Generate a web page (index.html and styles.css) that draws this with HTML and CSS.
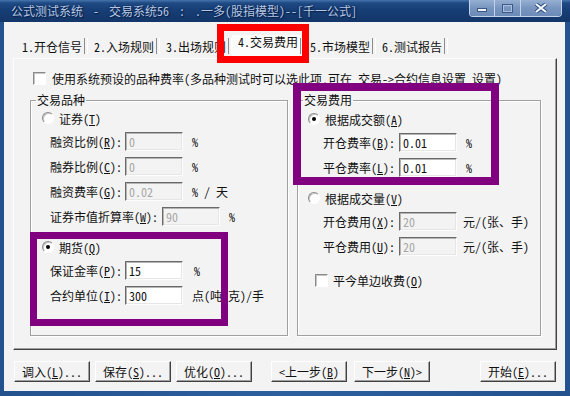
FILE: index.html
```html
<!DOCTYPE html>
<html lang="zh-CN">
<head>
    <meta charset="UTF-8">
    <title>公式测试系统</title>
    <link rel="stylesheet" href="styles.css">
</head>
<body>
<div class="window">
    <div class="titlebar">
        <span class="title">公式测试系统 - 交易系统56 : .一多(股指模型)--[千一公式]</span>
        <div class="caption-btns">
            <span class="cbtn cbtn-min"><i></i></span>
            <span class="cbtn cbtn-max"><i></i></span>
            <span class="cbtn cbtn-close">
                <svg width="14" height="10" viewBox="0 0 14 10">
                    <path d="M2 1 L12 9 M12 1 L2 9" stroke="#2b4a78" stroke-width="4"/>
                    <path d="M2 1 L12 9 M12 1 L2 9" stroke="#f4f8ff" stroke-width="2.2"/>
                </svg>
            </span>
        </div>
    </div>
    <div class="frame">
        <div class="client">
            <div class="tabs">
                <div class="tab">1.开仓信号</div>
                <div class="tab">2.入场规则</div>
                <div class="tab">3.出场规则</div>
                <div class="tab active">4.交易费用</div>
                <div class="tab">5.市场模型</div>
                <div class="tab">6.测试报告</div>
            </div>

            <div class="panel">
                <div class="check-row top-check"><span class="checkbox"></span>使用系统预设的品种费率(多品种测试时可以选此项,可在 交易->合约信息设置 设置)</div>

                <div class="groups">
                    <fieldset class="group group-kind">
                        <legend>交易品种</legend>
                        <div class="radio-row first"><span class="radio"></span>证券(<u>T</u>)</div>
                        <div class="row"><span class="lbl">融资比例(<u>R</u>):</span><span class="edit disabled">0</span><span class="unit">%</span></div>
                        <div class="row"><span class="lbl">融券比例(<u>C</u>):</span><span class="edit disabled">0</span><span class="unit">%</span></div>
                        <div class="row"><span class="lbl">融资费率(<u>G</u>):</span><span class="edit disabled">0.02</span><span class="unit">% / 天</span></div>
                        <div class="row"><span class="lbl lbl-wide">证券市值折算率(<u>W</u>):</span><span class="edit disabled">90</span><span class="unit">%</span></div>
                        <div class="radio-row"><span class="radio on"></span>期货(<u>Q</u>)</div>
                        <div class="row"><span class="lbl">保证金率(<u>P</u>):</span><span class="edit">15</span><span class="unit unit-pct">%</span></div>
                        <div class="row"><span class="lbl">合约单位(<u>I</u>):</span><span class="edit">300</span><span class="unit">点(吨 克)/手</span></div>
                    </fieldset>

                    <fieldset class="group group-fee">
                        <legend>交易费用</legend>
                        <div class="radio-row first"><span class="radio on"></span>根据成交额(<u>A</u>)</div>
                        <div class="row"><span class="lbl">开仓费率(<u>B</u>):</span><span class="edit">0.01</span><span class="unit">%</span></div>
                        <div class="row"><span class="lbl">平仓费率(<u>L</u>):</span><span class="edit">0.01</span><span class="unit">%</span></div>
                        <div class="radio-row"><span class="radio"></span>根据成交量(<u>V</u>)</div>
                        <div class="row"><span class="lbl">开仓费用(<u>X</u>):</span><span class="edit disabled">20</span><span class="unit unit-near">元/(张、手)</span></div>
                        <div class="row"><span class="lbl">平仓费用(<u>U</u>):</span><span class="edit disabled">20</span><span class="unit unit-near">元/(张、手)</span></div>
                        <div class="check-row today-check"><span class="checkbox"></span>平今单边收费(<u>O</u>)</div>
                    </fieldset>
                </div>
            </div>

            <div class="buttons">
                <button class="btn">调入(<u>L</u>)...</button>
                <button class="btn">保存(<u>S</u>)...</button>
                <button class="btn">优化(<u>O</u>)...</button>
                <button class="btn btn-prev">&lt;上一步(<u>B</u>)</button>
                <button class="btn btn-next">下一步(<u>N</u>)&gt;</button>
                <button class="btn btn-start">开始(<u>E</u>)...</button>
            </div>
        </div>
    </div>

    <!-- annotation boxes drawn over the dialog -->
    <div class="mark mark-tab"></div>
    <div class="mark mark-fee"></div>
    <div class="mark mark-kind"></div>
</div>
</body>
</html>
```

FILE: styles.css
```css
* {
    margin: 0;
    padding: 0;
    box-sizing: border-box;
}

body {
    width: 570px;
    height: 396px;
    overflow: hidden;
    font-family: "Noto Sans Mono CJK SC", "Noto Sans CJK SC", sans-serif;
    font-size: 12px;
    color: #111;
    background: #1f4b86;
}

u {
    text-decoration: underline;
    text-underline-offset: 1px;
}

.window {
    position: relative;
    width: 570px;
    height: 396px;
    display: flex;
    flex-direction: column;
    background: linear-gradient(90deg, #24528f, #2d5f9f 50%, #24528f);
}

/* title bar */
.titlebar {
    height: 22px;
    display: flex;
    align-items: flex-start;
    padding-left: 11px;
    background: linear-gradient(#4674ad 0, #1f4a84 3px, #173e76 45%, #133669 100%);
}

.title {
    flex: 1;
    line-height: 22px;
    white-space: nowrap;
    word-spacing: 4px;
    color: #b6c8e4;
    text-shadow: 0 0 2px #0a2148, 1px 1px 1px #0a2148;
}

.caption-btns {
    display: flex;
    height: 17px;
    margin-right: 8px;
    border: 1px solid #c3d2e8;
    border-top: none;
    border-radius: 0 0 4px 4px;
    overflow: hidden;
}

.cbtn {
    display: flex;
    align-items: center;
    justify-content: center;
    height: 100%;
    background: linear-gradient(#97b0d2, #7895c0 50%, #6d8bb8);
}

.cbtn + .cbtn {
    border-left: 1px solid #c3d2e8;
}

.cbtn-min {
    width: 24px;
    align-items: flex-end;
    padding-bottom: 4px;
}

.cbtn-min i {
    width: 10px;
    height: 4px;
    background: #eef3fb;
    border: 1px solid #3b5984;
}

.cbtn-max {
    width: 26px;
}

.cbtn-max i {
    width: 11px;
    height: 9px;
    border: 1px solid #3b5984;
    box-shadow: inset 0 0 0 1px #aac0de;
}

.cbtn-close {
    width: 41px;
}

/* window frame + client */
.frame {
    flex: 1;
    padding: 0 5px 5px 4px;
}

.client {
    height: 100%;
    display: flex;
    flex-direction: column;
    background: #f3f3f3;
}

/* tab strip */
.tabs {
    display: flex;
    height: 22px;
    margin: 13px 0 0 12px;
}

.tab {
    width: 72px;
    height: 22px;
    display: flex;
    align-items: center;
    padding-left: 6px;
    white-space: nowrap;
}

.tab::after {
    content: "";
    margin-left: auto;
    width: 2px;
    height: 16px;
    border-left: 1px solid #8c8c8c;
    border-right: 1px solid #fff;
}

.tab.active {
    align-items: flex-start;
    background: #fbfbfb;
    line-height: 14px;
}

.tab.active::after {
    margin-top: 3px;
}

/* tab page */
.panel {
    width: 544px;
    height: 292px;
    margin: 1px 0 0 9px;
    padding: 12px 0 0 16px;
    border: 1px solid;
    border-color: #fdfdfd #404040 #404040 #fdfdfd;
    box-shadow: inset -1px -1px 0 #a0a0a0;
}

.check-row {
    display: flex;
    align-items: center;
    height: 14px;
    white-space: nowrap;
}

.top-check {
    margin-left: 3px;
}

.checkbox {
    width: 13px;
    height: 13px;
    margin-right: 6px;
    background: #fff;
    border: 1px solid;
    border-color: #8a8a8a #fff #fff #8a8a8a;
    box-shadow: inset 1px 1px 0 #c4c4c4;
}

.groups {
    display: flex;
    margin-top: 8px;
}

.group {
    height: 243px;
    border: 1px solid #a0a0a0;
    box-shadow: 1px 1px 0 #fff, inset 1px 1px 0 #fff;
    padding: 0;
}

.group legend {
    margin-left: 5px;
    padding: 0 1px;
    line-height: 14px;
}

.group-kind {
    width: 258px;
}

.group-fee {
    width: 244px;
    margin-left: 9px;
}

.radio-row {
    display: flex;
    align-items: center;
    height: 16px;
    margin-top: 13px;
    white-space: nowrap;
}

.radio {
    position: relative;
    width: 12px;
    height: 12px;
    margin-right: 5px;
    border-radius: 50%;
    background: #fff;
    border: 1px solid;
    border-color: #8a8a8a #fff #fff #8a8a8a;
    box-shadow: inset 1px 1px 0 #c8c8c8;
}

.radio.on::after {
    content: "";
    position: absolute;
    left: 3px;
    top: 3px;
    width: 4px;
    height: 4px;
    border-radius: 50%;
    background: #000;
}

.row {
    display: flex;
    align-items: center;
    height: 19px;
    margin-top: 6px;
    white-space: nowrap;
}

.lbl {
    width: 75px;
}

.lbl-wide {
    width: 112px;
}

.edit {
    width: 58px;
    height: 19px;
    padding-left: 3px;
    line-height: 17px;
    background: #fff;
    border: 1px solid;
    border-color: #6a6a6a #fdfdfd #fdfdfd #6a6a6a;
    box-shadow: inset 1px 1px 0 #b4b4b4, inset -1px -1px 0 #e6e6e6;
}

.edit.disabled {
    background: #f3f3f3;
    color: #a8a8a8;
}

.unit {
    margin-left: 9px;
}

.unit-pct {
    margin-left: 11px;
}

.unit-near {
    margin-left: 6px;
}

/* left group offsets */
.group-kind .radio-row {
    margin-left: 11px;
}

.group-kind .row {
    margin-left: 19px;
}

.group-kind .radio-row.first {
    margin-top: 3px;
}

/* right group offsets */
.group-fee .radio-row {
    margin-left: 10px;
}

.group-fee .radio-row.first {
    margin-top: 4px;
}

.group-fee .row {
    margin-left: 25px;
}

.group-fee .lbl {
    width: 76px;
}

.today-check {
    margin: 17px 0 0 17px;
}

.today-check .checkbox {
    margin-right: 5px;
}

/* bottom buttons */
.buttons {
    display: flex;
    margin: 11px 0 0 10px;
}

.btn {
    width: 76px;
    height: 21px;
    font: inherit;
    color: #111;
    background: #f3f3f3;
    border: 1px solid;
    border-color: #fff #404040 #404040 #fff;
    box-shadow: inset -1px -1px 0 #a0a0a0;
    white-space: nowrap;
}

.btn + .btn {
    margin-left: 5px;
}

.btn-prev {
    margin-left: 19px !important;
}

.btn-next {
    margin-left: 7px !important;
}

.btn-start {
    margin-left: 50px !important;
}

/* red / purple highlight boxes */
.mark {
    position: absolute;
    pointer-events: none;
}

.mark-tab {
    left: 217px;
    top: 24px;
    width: 92px;
    height: 39px;
    border: 7px solid #f00;
}

.mark-fee {
    left: 293px;
    top: 83px;
    width: 206px;
    height: 102px;
    border: 8px solid #800080;
}

.mark-kind {
    left: 30px;
    top: 232px;
    width: 198px;
    height: 94px;
    border: 7px solid #800080;
}
```
